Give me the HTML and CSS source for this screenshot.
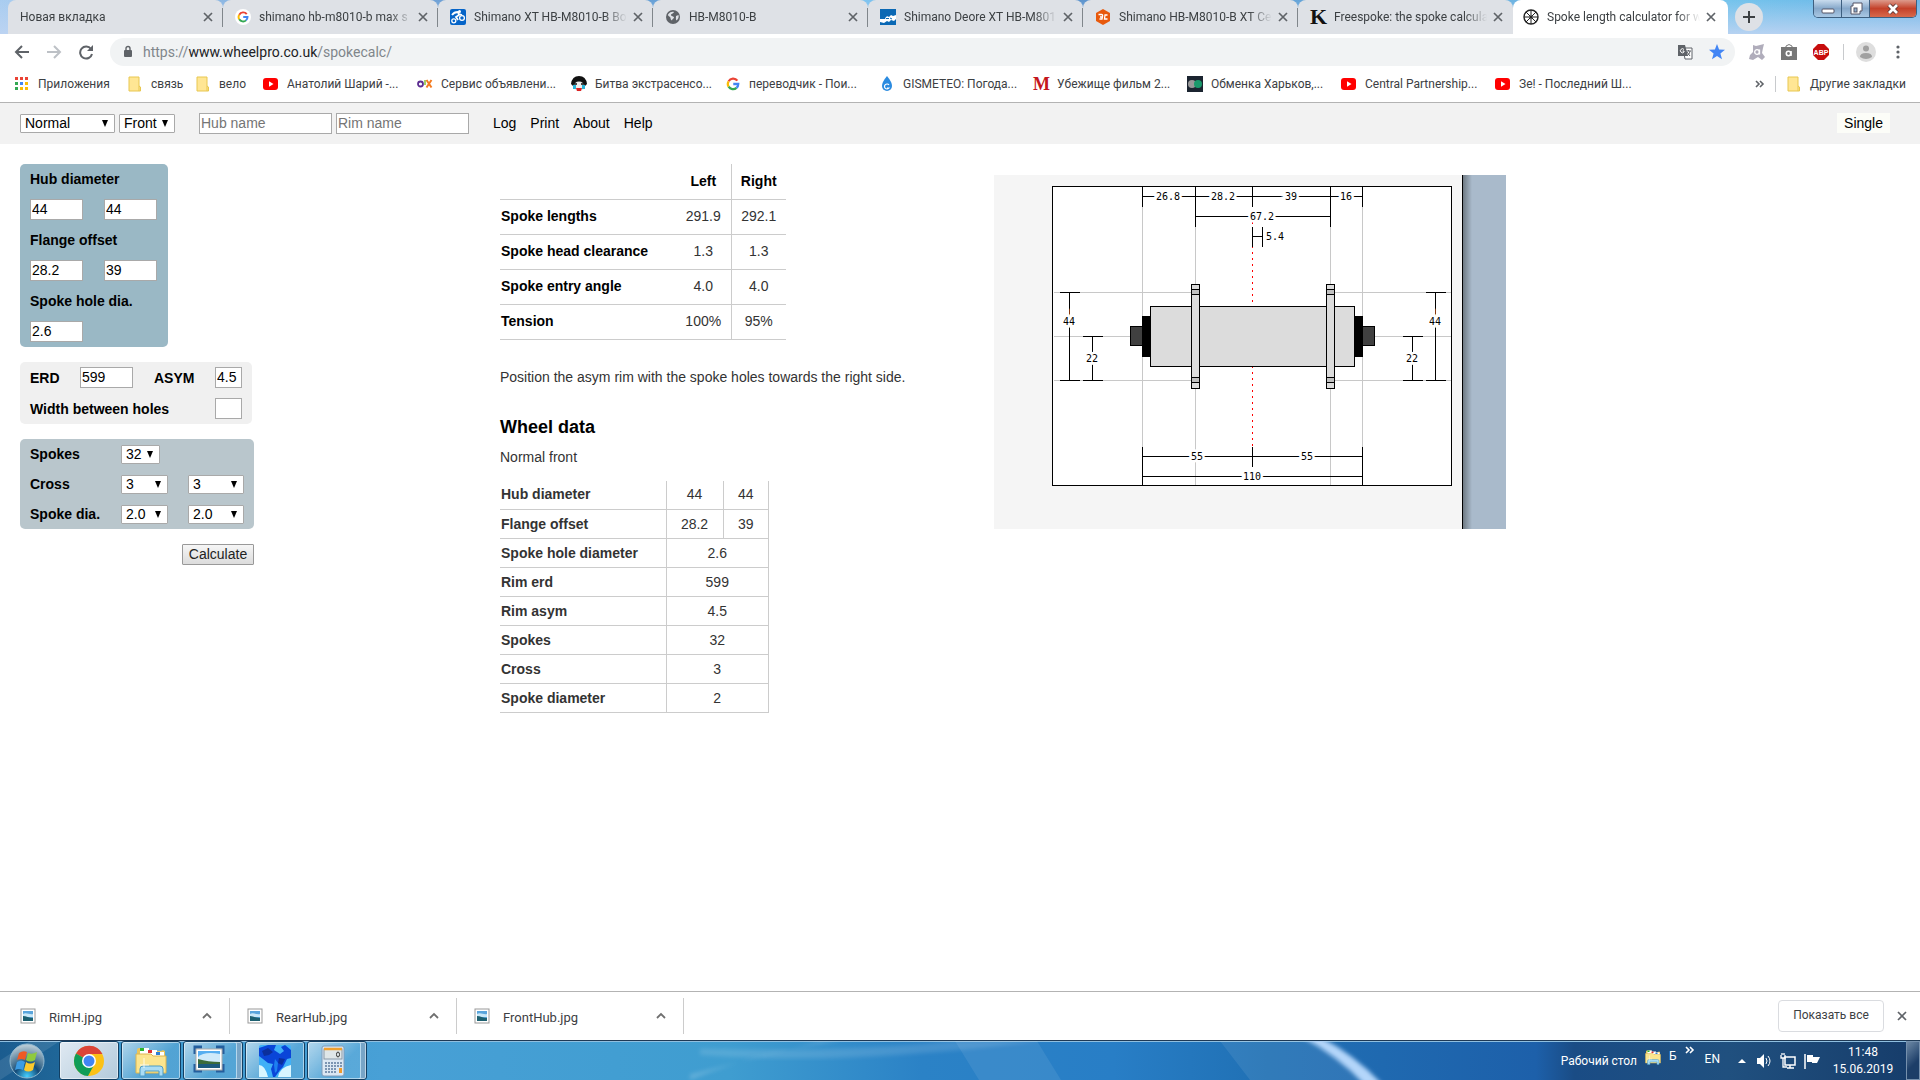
FILE: index.html
```html
<!DOCTYPE html>
<html lang="en">
<head>
    <meta charset="UTF-8">
    <meta name="viewport" content="width=device-width, initial-scale=1.0">
    <title>Spoke length calculator for wheelbuilding</title>
    <link rel="stylesheet" href="styles.css">
</head>
<body>
    <!-- shared icons -->
    <svg class="sprite" aria-hidden="true">
        <symbol id="i-close" viewBox="0 0 10 10"><path d="M1 1l8 8M9 1l-8 8" stroke="#5f6368" stroke-width="1.7"/></symbol>
        <symbol id="i-google" viewBox="0 0 16 16">
            <path d="M13 4.2A6 6 0 0 0 3 4.9" fill="none" stroke="#ea4335" stroke-width="2.6"/>
            <path d="M3 4.9a6 6 0 0 0 0 6.2" fill="none" stroke="#fbbc05" stroke-width="2.6"/>
            <path d="M3 11.1a6 6 0 0 0 9 1.4" fill="none" stroke="#34a853" stroke-width="2.6"/>
            <path d="M12 12.5A6 6 0 0 0 14 8H8.3" fill="none" stroke="#4285f4" stroke-width="2.6"/>
        </symbol>
        <symbol id="i-folder" viewBox="0 0 14 16"><path d="M1 1h10v9l1.5 1v4H1z" fill="#ffe694" stroke="#e8c750"/><path d="M11 10v5" stroke="#e8c750"/></symbol>
        <symbol id="i-youtube" viewBox="0 0 16 16"><rect x="0" y="2" width="15" height="12" rx="3" fill="#f00"/><path d="M6 5.3v5.4L10.5 8z" fill="#fff"/></symbol>
        <symbol id="i-picture" viewBox="0 0 16 16">
            <rect x="1" y="1" width="14" height="14" fill="#fff" stroke="#999"/>
            <rect x="3" y="3" width="10" height="10" fill="#5aa5dc"/>
            <path d="M3 6c3-2 7 1 10 0v3H3z" fill="#c9e8f8"/>
            <path d="M3 8c3 0 6 2 10 2v3H3z" fill="#1d6070"/>
        </symbol>
        <symbol id="i-up" viewBox="0 0 10 8"><path d="M1 6l4-4 4 4" fill="none" stroke="#6f6f6f" stroke-width="1.8"/></symbol>
        <symbol id="i-files" viewBox="0 0 32 32">
            <path d="M2 5q0-2 2-2h8l2 3h12l2-1 2 1v22H2z" fill="#e9c55c"/>
            <rect x="5" y="3" width="9" height="7" fill="#fff"/><rect x="5" y="3" width="4" height="3" fill="#2db52d"/>
            <rect x="13" y="5" width="9" height="6" fill="#fff"/><rect x="13" y="5" width="4" height="3" fill="#d33"/>
            <rect x="20" y="7" width="9" height="5" fill="#fff"/><rect x="21" y="7" width="4" height="3" fill="#2b7fd8"/>
            <path d="M1 9h15l2 2h13v17H1z" fill="#fbe58f" stroke="#dcb650"/>
            <path d="M5 31v-7q0-3 3-3h17q3 0 3 3v7h-4v-5H10v5z" fill="#a9dcf5" stroke="#4d9cc5"/>
            <path d="M9 13v10M5 20h9" stroke="#fff" opacity=".8"/>
        </symbol>
    </svg>

    <header class="browser">
        <div class="tabstrip">
            <div class="tab">
                <span class="tab-title">Новая вкладка</span>
                <button class="tab-close" aria-label="Close"><svg><use href="#i-close"/></svg></button>
            </div>
            <div class="tab">
                <svg class="icon" viewBox="0 0 16 16"><circle cx="8" cy="8" r="8" fill="#fff"/><use href="#i-google" x="2" y="2" width="12" height="12"/></svg>
                <span class="tab-title">shimano hb-m8010-b max s</span>
                <button class="tab-close" aria-label="Close"><svg><use href="#i-close"/></svg></button>
            </div>
            <div class="tab">
                <svg class="icon" viewBox="0 0 16 16"><rect width="16" height="16" rx="2" fill="#0564c8"/><g fill="none" stroke="#fff" stroke-width="1.3"><circle cx="3.8" cy="11.8" r="2"/><circle cx="12" cy="9" r="2.4"/><path d="M2 6q2-3 6-3l1 3-3 2 2 3M9 5l3 1" stroke-width="1.8"/></g><circle cx="9.500" cy="2.500" r="1.500" fill="#fff"/></svg>
                <span class="tab-title">Shimano XT HB-M8010-B Bo</span>
                <button class="tab-close" aria-label="Close"><svg><use href="#i-close"/></svg></button>
            </div>
            <div class="tab">
                <svg class="icon" viewBox="0 0 16 16"><circle cx="8" cy="8" r="7" fill="#5f6368"/><path d="M3 5.5c2-3 5-3 6-2.5-1 2-3 1.5-3 3s3 1 3 2.5-2 1-2 3c-2-1-1-2.5-2-3.5S3 7 3 5.5zM11 7l2.5-1c.5 2 0 4-2 5.5-1-1.5-.5-3-.5-4.5z" fill="#dee1e6"/></svg>
                <span class="tab-title">HB-M8010-B</span>
                <button class="tab-close" aria-label="Close"><svg><use href="#i-close"/></svg></button>
            </div>
            <div class="tab">
                <svg class="icon" viewBox="0 0 16 16"><rect width="16" height="16" fill="#0a68b4"/><path d="M0 10h5q1-4 4-2l2-2 2 1 3-1v4l-2 2-3-1-2 2-2-1-3 2-4-1z" fill="#fff"/><path d="M6 9.5h3M10 9l2 1" stroke="#0a68b4"/></svg>
                <span class="tab-title">Shimano Deore XT HB-M801</span>
                <button class="tab-close" aria-label="Close"><svg><use href="#i-close"/></svg></button>
            </div>
            <div class="tab">
                <svg class="icon" viewBox="0 0 16 16"><path d="M8 0l7 4v8l-7 4-7-4V4z" fill="#e8590c"/><path d="M3.500 5.500h3q1.500 0 1 2L7 10H4.500M12.500 6h-2.500L9.500 10h3M5 8h2" fill="none" stroke="#fff" stroke-width="1.300"/></svg>
                <span class="tab-title">Shimano HB-M8010-B XT Ce</span>
                <button class="tab-close" aria-label="Close"><svg><use href="#i-close"/></svg></button>
            </div>
            <div class="tab tab-last">
                <span class="icon letter-k">K</span>
                <span class="tab-title">Freespoke: the spoke calcula</span>
                <button class="tab-close" aria-label="Close"><svg><use href="#i-close"/></svg></button>
            </div>
            <div class="tab tab-active">
                <svg class="icon" viewBox="0 0 16 16"><g fill="none" stroke="#222"><circle cx="8" cy="8" r="7" stroke-width="1.4"/><path d="M8 1v14M1 8h14M3 3l10 10M13 3L3 13"/></g><circle cx="8" cy="8" r="1.5" fill="#222"/></svg>
                <span class="tab-title">Spoke length calculator for w</span>
                <button class="tab-close" aria-label="Close"><svg><use href="#i-close"/></svg></button>
            </div>
            <button class="new-tab" aria-label="New tab"><svg viewBox="0 0 14 14"><path d="M7 1v12M1 7h12" stroke="#3c4043" stroke-width="2"/></svg></button>
            <div class="window-buttons">
                <button aria-label="Minimize"><svg viewBox="0 0 16 14"><rect x="2" y="7" width="12" height="4" rx="1" fill="#fff" stroke="#556"/></svg></button>
                <button aria-label="Restore"><svg viewBox="0 0 16 14"><path d="M5 1h9v8h-2v3H3V4h2z" fill="#fff" stroke="#556"/><rect x="6" y="6" width="3" height="4" fill="#8fb0cf" stroke="#556"/></svg></button>
                <button class="window-close" aria-label="Close window"><svg viewBox="0 0 16 14"><path d="M4 3l8 8M12 3l-8 8" stroke="#533" stroke-width="4.5"/><path d="M4 3l8 8M12 3l-8 8" stroke="#fff" stroke-width="2.8"/></svg></button>
            </div>
        </div>

        <div class="toolbar">
            <button class="nav" aria-label="Back"><svg viewBox="0 0 16 16"><path d="M15 8H2M8 2L2 8l6 6" fill="none" stroke="#5f6368" stroke-width="2"/></svg></button>
            <button class="nav" aria-label="Forward"><svg viewBox="0 0 16 16"><path d="M1 8h13M8 2l6 6-6 6" fill="none" stroke="#bdc1c6" stroke-width="2"/></svg></button>
            <button class="nav" aria-label="Reload"><svg viewBox="0 0 16 16"><path d="M13 5a6 6 0 1 0 1 5" fill="none" stroke="#5f6368" stroke-width="2"/><path d="M15 1v6H9z" fill="#5f6368"/></svg></button>
            <div class="omnibox">
                <svg class="lock" viewBox="0 0 10 14"><rect x="1" y="5" width="8" height="7" rx="1" fill="#5f6368"/><path d="M3 6V3.5a2 2 0 0 1 4 0V6" fill="none" stroke="#5f6368" stroke-width="1.4"/></svg>
                <span class="url">https://<b>www.wheelpro.co.uk</b>/spokecalc/</span>
                <svg class="icon" viewBox="0 0 16 16"><path d="M6 4h9v11H8z" fill="#fff" stroke="#5f6368"/><path d="M1 1h7l3 11H1z" fill="#5f6368"/><path d="M7 5.5A2 2 0 1 0 7 8V7H5.5" fill="none" stroke="#fff"/><path d="M9 7h5M11.5 6v1M13 7c-.5 3-2 4-3 5M10 8l3 4" fill="none" stroke="#5f6368"/></svg>
                <svg class="icon" viewBox="0 0 16 16"><path d="M8 0l2.1 5.6 5.9.2-4.6 3.7 1.6 5.8L8 12l-5 3.3 1.6-5.800L0 5.800l5.900-.2z" fill="#4285f4"/></svg>
            </div>
            <svg class="icon" viewBox="0 0 16 16"><path d="M4 1l3 1 8-2-1 4-1 5 3 4-3 3-4-3-5 3-4-1 1-4 3-3z" fill="#b0adbb"/><circle cx="8" cy="8" r="2.300" fill="none" stroke="#fff" stroke-width="1.300"/><path d="M10.500 5.500v5" stroke="#fff" stroke-width="1.300"/></svg>
            <svg class="icon" viewBox="0 0 16 16"><path d="M0 3h16v13H0z" fill="#777"/><path d="M5 4V2q3-3 6 0v2" fill="none" stroke="#777"/><circle cx="7.500" cy="9.500" r="2.200" fill="none" stroke="#fff" stroke-width="1.600"/><path d="M10 7v5" stroke="#fff" stroke-width="1.600"/></svg>
            <svg class="icon" viewBox="0 0 16 16"><path d="M5 0h6l5 5v6l-5 5H5l-5-5V5z" fill="#c70d0d"/><text x="8" y="11" class="abp">ABP</text></svg>
            <i class="divider"></i>
            <svg class="avatar" viewBox="0 0 20 20"><circle cx="10" cy="10" r="10" fill="#dedede"/><circle cx="10" cy="6.500" r="3" fill="#a0a0a0"/><path d="M4 15q0-4 6-4t6 4q-6 4-12 0z" fill="#a0a0a0"/></svg>
            <button class="menu" aria-label="Menu"><svg viewBox="0 0 4 14"><g fill="#5f6368"><circle cx="2" cy="2" r="1.600"/><circle cx="2" cy="7" r="1.600"/><circle cx="2" cy="12" r="1.600"/></g></svg></button>
        </div>

        <nav class="bookmarks">
            <a href="#" class="apps"><svg class="icon" viewBox="0 0 16 16"><g fill="#ea4335"><path d="M1 1h3v3H1zM6 1h3v3H6zM11 1h3v3h-3z"/></g><path d="M1 6h3v3H1zM1 11h3v3H1z" fill="#34a853"/><path d="M6 6h3v3H6z" fill="#4285f4"/><path d="M6 11h3v3H6zM11 11h3v3h-3zM11 6h3v3h-3z" fill="#fbbc05"/></svg>Приложения</a>
            <a href="#" class="folder"><svg class="icon"><use href="#i-folder"/></svg>связь</a>
            <a href="#" class="folder"><svg class="icon"><use href="#i-folder"/></svg>вело</a>
            <a href="#"><svg class="icon"><use href="#i-youtube"/></svg>Анатолий Шарий -...</a>
            <a href="#"><svg class="icon" viewBox="0 0 16 16"><circle cx="3.5" cy="8" r="2.5" fill="none" stroke="#5c2d91" stroke-width="1.8"/><path d="M8 4v5" stroke="#8cc63f" stroke-width="1.6"/><path d="M9.500 4l5 7.500M14.500 4l-5 7.500" stroke="#f47b20" stroke-width="2"/></svg>Сервис объявлени...</a>
            <a href="#"><svg class="icon" viewBox="0 0 16 16"><path d="M0 8Q1 0 8 0t8 8l-3 3H3z" fill="#111"/><ellipse cx="8" cy="10.500" rx="5.500" ry="5" fill="#eee"/><path d="M3 8h3M10 8h3" stroke="#111" stroke-width="1.500"/><path d="M2 9h3v4H2zM11 9h3v4h-3z" fill="#28b4d8"/><path d="M5 12h6l-1 3H6z" fill="#d22"/></svg>Битва экстрасенсо...</a>
            <a href="#"><svg class="icon" viewBox="0 0 16 16"><use href="#i-google" x="1" y="1" width="14" height="14"/></svg>переводчик - Пои...</a>
            <a href="#"><svg class="icon" viewBox="0 0 16 16"><path d="M8 0q5 6 5 10a5 5 0 0 1-10 0Q3 6 8 0z" fill="#2b8be0"/><path d="M10 9a2.500 2.500 0 1 0 0 3H8" fill="none" stroke="#fff" stroke-width="1.200"/></svg>GISMETEO: Погода...</a>
            <a href="#"><span class="icon letter-m">M</span>Убежище фильм 2...</a>
            <a href="#"><svg class="icon" viewBox="0 0 16 16"><rect width="16" height="16" fill="#1b2430"/><circle cx="5" cy="8" r="4" fill="#999"/><circle cx="11" cy="8" r="4" fill="#1a9a6c"/></svg>Обменка Харьков,...</a>
            <a href="#"><svg class="icon"><use href="#i-youtube"/></svg>Central Partnership...</a>
            <a href="#"><svg class="icon"><use href="#i-youtube"/></svg>Зе! - Последний Ш...</a>
            <div class="bookmarks-end">
                <button class="more" aria-label="More bookmarks"><svg viewBox="0 0 10 8"><path d="M1 1l3 3-3 3M5 1l3 3-3 3" fill="none" stroke="#5f6368" stroke-width="1.600"/></svg></button>
                <i class="divider"></i>
                <a href="#" class="other"><svg class="icon"><use href="#i-folder"/></svg>Другие закладки</a>
            </div>
        </nav>
    </header>

    <div class="topbar">
        <select class="wheel-type" aria-label="Wheel type"><option>Normal</option></select>
        <select class="wheel-end" aria-label="Wheel"><option>Front</option></select>
        <input class="hub-name" type="text" placeholder="Hub name" aria-label="Hub name">
        <input type="text" placeholder="Rim name" aria-label="Rim name">
        <nav class="links">
            <a href="#">Log</a>
            <a href="#">Print</a>
            <a href="#">About</a>
            <a href="#">Help</a>
        </nav>
        <a href="#" class="single">Single</a>
    </div>

    <main>
        <form class="inputs">
            <div class="panel hub">
                <label for="hub-l">Hub diameter</label>
                <input type="text" id="hub-l" value="44"><input type="text" aria-label="Hub diameter right" value="44">
                <label for="flange-l">Flange offset</label>
                <input type="text" id="flange-l" value="28.2"><input type="text" aria-label="Flange offset right" value="39">
                <label for="hole">Spoke hole dia.</label>
                <input type="text" id="hole" value="2.6">
            </div>
            <div class="panel rim">
                <label for="erd">ERD</label><input type="text" id="erd" value="599">
                <label for="asym">ASYM</label><input type="text" class="small" id="asym" value="4.5">
                <label for="width" class="wide">Width between holes</label><input type="text" class="small" id="width">
            </div>
            <div class="panel spokes">
                <label for="spokes">Spokes</label><select id="spokes" class="count"><option>32</option></select>
                <label for="cross">Cross</label><select id="cross"><option>3</option></select><select class="right" aria-label="Cross right"><option>3</option></select>
                <label for="dia">Spoke dia.</label><select id="dia"><option>2.0</option></select><select class="right" aria-label="Spoke dia. right"><option>2.0</option></select>
            </div>
            <button type="button" class="calculate">Calculate</button>
        </form>

        <section class="results">
            <table class="lengths">
                <tr><th></th><th>Left</th><th>Right</th></tr>
                <tr><th>Spoke lengths</th><td>291.9</td><td>292.1</td></tr>
                <tr><th>Spoke head clearance</th><td>1.3</td><td>1.3</td></tr>
                <tr><th>Spoke entry angle</th><td>4.0</td><td>4.0</td></tr>
                <tr><th>Tension</th><td>100%</td><td>95%</td></tr>
            </table>
            <p class="note">Position the asym rim with the spoke holes towards the right side.</p>
            <h2>Wheel data</h2>
            <p>Normal front</p>
            <table class="data">
                <tr><th>Hub diameter</th><td class="left">44</td><td class="right">44</td></tr>
                <tr><th>Flange offset</th><td>28.2</td><td>39</td></tr>
                <tr><th>Spoke hole diameter</th><td colspan="2">2.6</td></tr>
                <tr><th>Rim erd</th><td colspan="2">599</td></tr>
                <tr><th>Rim asym</th><td colspan="2">4.5</td></tr>
                <tr><th>Spokes</th><td colspan="2">32</td></tr>
                <tr><th>Cross</th><td colspan="2">3</td></tr>
                <tr><th>Spoke diameter</th><td colspan="2">2</td></tr>
            </table>
        </section>

        <div class="drawing">
            <svg class="hub-drawing" width="400" height="300" viewBox="0 0 400 300">
                <g transform="translate(.5 .5)" shape-rendering="crispEdges">
                    <rect width="399" height="299" fill="#fff" stroke="#000"/>
                    <path class="guide" d="M90 1V298M143 1V298M278 1V298M310 1V298M1 106H143M278 106H398M1 150H398M1 194H143M278 194H398"/>
                    <path d="M200 35V260" stroke="red" stroke-dasharray="2 4"/>
                    <rect x="78" y="140" width="12" height="19" fill="#404040" stroke="#000"/>
                    <rect x="310" y="140" width="12" height="19" fill="#404040" stroke="#000"/>
                    <rect x="90" y="130" width="8" height="40" stroke="#000"/>
                    <rect x="302" y="130" width="8" height="40" stroke="#000"/>
                    <rect x="98" y="120" width="204" height="60" fill="#dcdcdc" stroke="#000"/>
                    <g fill="#dcdcdc" stroke="#000">
                        <rect x="139" y="98" width="8" height="104"/>
                        <rect x="274" y="98" width="8" height="104"/>
                        <g fill="#c0c0c0">
                            <rect x="139" y="103" width="8" height="5"/>
                            <rect x="274" y="103" width="8" height="5"/>
                            <rect x="139" y="191" width="8" height="5"/>
                            <rect x="274" y="191" width="8" height="5"/>
                        </g>
                    </g>
                    <!-- dimension lines -->
                    <path d="M90 10H310M90 0V20M143 0V40M200 0V20M278 0V40M310 0V20M143 30H278M200 40V60M210 40V60M200 50H210" stroke="#000"/>
                    <path d="M90 260V299M200 260V280M310 260V299M90 270H310M90 290H310" stroke="#000"/>
                    <path d="M17 106V194M7 106H27M7 194H27M40 150V194M30 150H50M30 194H50" stroke="#000"/>
                    <path d="M383 106V194M373 106H393M373 194H393M360 150V194M350 150H370M350 194H370" stroke="#000"/>
                </g>
                <g class="dims">
                    <text x="116" y="14">26.8</text>
                    <text x="171" y="14">28.2</text>
                    <text x="239" y="14">39</text>
                    <text x="294" y="14">16</text>
                    <text x="210" y="34">67.2</text>
                    <text x="223" y="54">5.4</text>
                    <text x="17" y="139">44</text>
                    <text x="383" y="139">44</text>
                    <text x="40" y="176">22</text>
                    <text x="360" y="176">22</text>
                    <text x="145" y="274">55</text>
                    <text x="255" y="274">55</text>
                    <text x="200" y="294">110</text>
                </g>
            </svg>
        </div>
    </main>

    <div class="downloads">
        <div class="download"><svg class="icon"><use href="#i-picture"/></svg><span>RimH.jpg</span><svg class="up"><use href="#i-up"/></svg></div>
        <div class="download"><svg class="icon"><use href="#i-picture"/></svg><span>RearHub.jpg</span><svg class="up"><use href="#i-up"/></svg></div>
        <div class="download"><svg class="icon"><use href="#i-picture"/></svg><span>FrontHub.jpg</span><svg class="up"><use href="#i-up"/></svg></div>
        <button class="show-all">Показать все</button>
        <button class="hide" aria-label="Close"><svg><use href="#i-close"/></svg></button>
    </div>

    <footer class="taskbar">
        <svg class="streaks" viewBox="0 0 1920 40" preserveAspectRatio="none">
            <defs><filter id="soft"><feGaussianBlur stdDeviation="2"/></filter></defs>
            <path d="M0 40L60 0H30L0 20z" fill="#fff" opacity=".1"/>
            <path d="M690 40Q760 10 840 0h-20Q750 20 690 34z" fill="#fff" opacity=".18" filter="url(#soft)"/>
            <path d="M700 14q140 12 340-14h-90q-100 12-250 8z" fill="#fff" opacity=".12" filter="url(#soft)"/>
            <path d="M955 0h82l24 40h-82zM1220 0h90l60 40h-120z" fill="#fff" opacity=".08"/>
            <path d="M1302-4h18q34 18 62 48h-18q-26-28-62-48z" fill="#b4d6fa" filter="url(#soft)"/>
        </svg>
        <button class="start" aria-label="Start">
            <svg viewBox="0 0 38 38">
                <defs><radialGradient id="orb" cx=".5" cy=".95" r=".9"><stop offset="0" stop-color="#45d0ff"/><stop offset=".4" stop-color="#134a78"/><stop offset=".6" stop-color="#4d7896"/><stop offset="1" stop-color="#b5c8d3"/></radialGradient></defs>
                <circle cx="19" cy="19" r="17" fill="url(#orb)" stroke="#8fb8d0"/>
                <path d="M11 11q4-3 8-1l-2 8q-4-2-8 0z" fill="#ef5a24"/>
                <path d="M20 11q4 2 9-1l-2 8q-5 3-9 0z" fill="#8fca3d"/>
                <path d="M9 20q4-3 8 0l-2 8q-4-2-8 0z" fill="#3c9ce4"/>
                <path d="M18 20q4 3 9 0l-2 8q-5 3-9 0z" fill="#fdc92c"/>
            </svg>
        </button>
        <button class="task task-active" aria-label="Chrome">
            <svg viewBox="0 0 32 32"><circle cx="16" cy="16" r="15" fill="#fbc116"/><path d="M16 16L3 8.500A15 15 0 0 1 29.500 9H16z" fill="#db4437"/><path d="M16 16L3 8.500A15 15 0 0 0 15 31l6-11z" fill="#0f9d58"/><circle cx="16" cy="16" r="7" fill="#fff"/><circle cx="16" cy="16" r="5.500" fill="#4285f4"/></svg>
        </button>
        <button class="task" aria-label="Explorer"><svg><use href="#i-files"/></svg></button>
        <button class="task stack" aria-label="Pictures">
            <svg viewBox="0 0 32 32"><path d="M2 9V2h7M23 2h7v7M30 19v7h-7M9 26H2v-7" fill="none" stroke="#245f9e" stroke-width="3"/><rect x="3" y="4" width="26" height="21" fill="#fff" stroke="#aaa"/><rect x="5" y="6" width="22" height="17" fill="#57aef0"/><path d="M5 12q6-6 22-3v8H5z" fill="#cfeafa"/><path d="M5 14q10 3 22 3v3H5z" fill="#3b6b3a"/><path d="M5 19h22v4H5z" fill="#1c5a7e"/></svg>
        </button>
        <button class="task" aria-label="Map">
            <svg viewBox="0 0 32 32"><rect width="32" height="32" rx="2" fill="#3fb0f7"/><path d="M0 20q6 0 9 12H0zM19 32q2-10 13-12v12z" fill="#d8f6ff"/><path d="M0 3L9 0h8l-2 5 6 4 4-3-3-4 4-2 6 5v8l-4 1-4 8-3 3-5 7h-2l-2-8 2-5-5-1-5-4-4-3z" fill="#0a45d8"/><path d="M3 6l6-3 5 4-4 3-5 1zM20 13l6 1-3 6-4-2z" fill="#0b2f9c"/><path d="M16 14l3 4-1 8-2 2-1-8z" fill="#1d80f0"/></svg>
        </button>
        <button class="task stack" aria-label="Calculator">
            <svg viewBox="0 0 32 32"><rect x="5" y="1" width="22" height="30" rx="2" fill="#dbe7f3" stroke="#7f9cba"/><rect x="7" y="4" width="18" height="10" fill="#dfe6e8" stroke="#8a9aa8"/><path d="M7 4h18" stroke="#f0a030" stroke-width="2.500"/><ellipse cx="21" cy="9.500" rx="1.500" ry="2.500" fill="none" stroke="#333"/><g stroke="#7c95b2" stroke-width="2" stroke-dasharray="2 1"><path d="M8 18h17M8 21h17M8 24h12M8 27h12"/></g><rect x="22" y="23" width="3" height="5" fill="#f09b2c"/></svg>
        </button>
        <div class="tray">
            <span class="desktop">Рабочий стол</span>
            <svg class="tray-files"><use href="#i-files"/></svg>
            <span class="cut">Б</span>
            <svg class="chev" viewBox="0 0 10 8"><path d="M1 1l3 3-3 3M5 1l3 3-3 3" fill="none" stroke="#fff" stroke-width="1.600"/></svg>
            <span class="lang">EN</span>
            <svg class="tri" viewBox="0 0 8 4"><path d="M4 0l4 4H0z" fill="#fff"/></svg>
            <svg class="icon" viewBox="0 0 16 16"><path d="M1 5h3l4-4v14l-4-4H1z" fill="#fff"/><path d="M10 5q2 3 0 6M12 3q4 5 0 10" fill="none" stroke="#fff"/></svg>
            <svg class="icon" viewBox="0 0 16 16"><path d="M5 4h10v8H5zM7 15h7M10 12v3" fill="none" stroke="#fff" stroke-width="1.500"/><path d="M1 2v3h4V2M3 5v9h4M2 0v2M4 0v2" fill="none" stroke="#fff" stroke-width="1.300"/></svg>
            <svg class="icon" viewBox="0 0 16 16"><path d="M1 1v15" stroke="#fff" stroke-width="1.500"/><path d="M3 2h6v2h7l-3 6H8V9H3z" fill="#fff"/></svg>
            <div class="clock"><span>11:48</span><span>15.06.2019</span></div>
            <button class="peek" aria-label="Show desktop"></button>
        </div>
    </footer>
</body>
</html>
```

FILE: styles.css
```css
* {
    box-sizing: border-box;
}
body {
    margin: 0;
    min-height: 100vh;
    display: flex;
    flex-direction: column;
    background: #fff;
    color: #333;
    font-family: "Liberation Sans", Arial, sans-serif;
    font-size: 14px;
}
.sprite {
    position: absolute;
    width: 0;
    height: 0;
}
button {
    padding: 0;
    border: none;
    background: none;
    font: inherit;
    color: inherit;
}
a {
    color: inherit;
    text-decoration: none;
}
.icon {
    width: 16px;
    height: 16px;
    flex: none;
}
.divider {
    width: 1px;
    height: 16px;
    background: #c8cacd;
}

/* browser window */
.browser, .downloads, .taskbar {
    font-family: Roboto, "Noto Sans", sans-serif;
    font-size: 12px;
}
.browser {
    border-bottom: 1px solid #b3b3b3;
    color: #3c4043;
}
.tabstrip {
    display: flex;
    align-items: center;
    height: 34px;
    padding-left: 8px;
    background: linear-gradient(rgba(255, 255, 255, 0), rgba(190, 212, 242, 0.9)), linear-gradient(90deg, #a9cdf0, #5d93cd 30%, #7fc4f0 45%, #5c92cc 55%, #74c3ec 90%, #6ab4e6);
}
.tab {
    display: flex;
    align-items: center;
    flex: 0 1 215px;
    min-width: 0;
    height: 34px;
    padding: 0 10px 0 12px;
    border-radius: 8px 8px 0 0;
    background: linear-gradient(#80868b, #80868b) right 8px / 1px 19px no-repeat #dee1e6;
}
.tab-last {
    background: #dee1e6;
}
.tab-active {
    padding: 0 12px 0 10px;
    background: #fff;
}
.tab .icon {
    margin-right: 8px;
}
.tab-title {
    flex: 1;
    overflow: hidden;
    white-space: nowrap;
    -webkit-mask-image: linear-gradient(90deg, #000 85%, transparent);
    mask-image: linear-gradient(90deg, #000 85%, transparent);
}
.tab-close {
    width: 10px;
    height: 10px;
    margin-left: 6px;
}
.tab-close svg, .hide svg {
    display: block;
    width: 10px;
    height: 10px;
}
.letter-k, .letter-m {
    font: bold 22px/16px "Liberation Serif", serif;
    color: #111;
}
.letter-m {
    font-size: 18px;
    color: #c4161c;
}
.new-tab {
    width: 28px;
    height: 28px;
    margin-left: 7px;
    border-radius: 50%;
    background: #dee1e6;
}
.new-tab svg {
    display: block;
    width: 14px;
    margin: auto;
}
.window-buttons {
    display: flex;
    align-self: flex-start;
    margin: 0 3px 0 auto;
    border: 1px solid #3d5f80;
    border-top: none;
    border-radius: 0 0 5px 5px;
    overflow: hidden;
}
.window-buttons button {
    width: 28px;
    height: 17px;
    border-right: 1px solid #3d5f80;
    background: linear-gradient(#c9dcee, #86a8ca 50%, #a9c8e4);
}
.window-buttons svg {
    display: block;
    width: 16px;
    height: 14px;
    margin: auto;
}
.window-buttons .window-close {
    width: 46px;
    border: none;
    background: linear-gradient(#dd9b8c, #c4412a 50%, #d8694b);
}
.toolbar {
    display: flex;
    align-items: center;
    height: 36px;
    padding: 0 20px 0 14px;
    gap: 16px;
}
.nav {
    width: 16px;
    height: 16px;
}
.nav svg {
    display: block;
}
.omnibox {
    display: flex;
    align-items: center;
    gap: 16px;
    flex: 1;
    height: 28px;
    padding: 0 10px 0 13px;
    border-radius: 14px;
    background: #f1f3f4;
}
.toolbar .omnibox {
    margin-right: -2px;
}
.lock {
    width: 10px;
    height: 14px;
}
.url {
    flex: 1;
    margin-left: -6px;
    font-size: 14px;
    color: #80868b;
}
.url b {
    font-weight: normal;
    color: #202124;
}
.abp {
    font: bold 7px "Liberation Sans", sans-serif;
    text-anchor: middle;
    fill: #fff;
}
.toolbar .divider {
    margin-left: -2px;
}
.avatar {
    width: 20px;
    height: 20px;
    margin-left: -4px;
}
.menu {
    width: 4px;
    margin-left: 4px;
}
.menu svg {
    display: block;
}
.bookmarks {
    display: flex;
    align-items: center;
    height: 32px;
    padding: 0 14px 4px;
    white-space: nowrap;
}
.bookmarks a {
    display: flex;
    align-items: center;
    gap: 8px;
    flex: 0 1 154px;
}
.bookmarks .apps {
    flex-basis: 113px;
}
.bookmarks .folder {
    flex-basis: 68px;
}
.bookmarks-end {
    display: flex;
    align-items: center;
    gap: 10px;
    margin-left: auto;
}
.bookmarks .other {
    flex: none;
}
.more svg {
    display: block;
    width: 10px;
    height: 8px;
}

/* calculator */
.topbar {
    display: flex;
    align-items: center;
    gap: 4px;
    height: 41px;
    padding: 0 30px 1px 20px;
    background: #f2f2f2;
    color: #000;
}
input, select {
    height: 21px;
    margin: 0;
    padding: 0 1px 1px;
    border: 1px solid #a9a9a9;
    border-radius: 0;
    background: #fff;
    color: #000;
    font: 14px "Liberation Sans", Arial, sans-serif;
}
input::placeholder {
    color: #757575;
}
select {
    height: 19px;
    padding: 0 4px;
    border-radius: 1px;
    appearance: none;
    background: #fff url("data:image/svg+xml,%3Csvg xmlns='http://www.w3.org/2000/svg' width='6' height='7'%3E%3Cpath d='M0 0h6L3 7z'/%3E%3C/svg%3E") no-repeat right 6px center;
}
.topbar input {
    width: 133px;
}
.topbar .hub-name {
    margin-left: 20px;
}
.wheel-type {
    width: 95px;
}
.wheel-end {
    width: 56px;
}
.links {
    display: flex;
    gap: 14px;
    margin-left: 20px;
}
.single {
    margin-left: auto;
    padding: 2px 7px;
    background: #fcfdf8;
}
main {
    flex: 1;
    display: grid;
    grid-template-columns: 480fr 494fr 906fr;
    align-items: start;
    padding: 20px;
}
.inputs {
    width: 234px;
}
.panel {
    display: grid;
    align-items: center;
    width: fit-content;
    margin-bottom: 15px;
    padding: 0 10px;
    border-radius: 5px;
    color: #000;
}
.panel label {
    font-weight: bold;
}
.panel input {
    width: 53px;
}
.panel .small {
    width: 27px;
}
.hub {
    grid-template-columns: 74px 54px;
    grid-template-rows: repeat(3, 30px 31px);
    background: #9ab8c5;
}
.hub label {
    grid-column: 1 / -1;
}
.rim {
    grid-template-columns: 50px 74px 61px 27px;
    grid-auto-rows: 31px;
    background: #f0f0f0;
}
.rim .wide {
    grid-column: 1 / 4;
}
.spokes {
    grid-template-columns: 91px 67px 56px;
    grid-auto-rows: 30px;
    background: #b9c6cc;
}
.spokes label {
    grid-column: 1;
}
.spokes select {
    width: 47px;
}
.spokes .count {
    width: 39px;
}
.spokes .right {
    width: 56px;
}
.calculate {
    display: block;
    width: 72px;
    height: 21px;
    margin-left: auto;
    padding-bottom: 1px;
    border: 1px solid #999;
    border-radius: 1px;
    background: linear-gradient(#f6f6f6, #dcdcdc);
    color: #222;
}
table {
    border-collapse: collapse;
    text-align: center;
}
th, td {
    padding: 0 2px 1px;
    border-bottom: 1px solid #ccc;
}
th:first-child {
    padding-left: 1px;
    text-align: left;
}
.lengths {
    width: 286px;
    table-layout: fixed;
}
.lengths tr {
    height: 35px;
}
.lengths th {
    color: #000;
}
.lengths th:first-child {
    width: 176px;
}
.lengths th:last-child, .lengths td:last-child {
    border-left: 1px solid #ccc;
}
.note {
    margin: 29px 0 32px;
    line-height: 16px;
}
h2 {
    margin: 0 0 12px;
    color: #000;
    font-size: 18px;
    line-height: 20px;
}
.results p:not(.note) {
    margin: 0 0 16px;
    line-height: 16px;
}
.data {
    width: 269px;
}
.data tr {
    height: 29px;
}
.data td {
    border-left: 1px solid #ccc;
    border-right: 1px solid #ccc;
}
.data th {
    width: 166px;
}
.data .left {
    width: 57px;
}
.drawing {
    width: 512px;
    height: 354px;
    margin-top: 11px;
    padding: 11px 0 0 58px;
    background: linear-gradient(90deg, #f5f5f5 468px, #000 468px, #000 469px, #6f7a83 469px, #a9bacb 478px);
}
.hub-drawing {
    display: block;
}
.hub-drawing path {
    fill: none;
}
.guide {
    stroke: #c8c8c8;
}
.dims {
    font: 10px "DejaVu Sans Mono", monospace;
    text-anchor: middle;
    fill: #000;
    stroke: #fff;
    stroke-width: 5px;
    paint-order: stroke;
}

/* downloads shelf */
.downloads {
    display: flex;
    align-items: center;
    height: 49px;
    padding: 0 13px 0 3px;
    border-top: 1px solid #b3b3b3;
    color: #3c4043;
}
.download {
    display: flex;
    align-items: center;
    gap: 13px;
    flex: 0 1 227px;
    height: 36px;
    padding: 0 17px;
    border-right: 1px solid #ccc;
    font-size: 13px;
}
.download span {
    flex: 1;
    padding-top: 3px;
}
.up {
    width: 10px;
    height: 8px;
}
.show-all {
    width: 106px;
    height: 32px;
    margin-left: auto;
    padding-bottom: 2px;
    border: 1px solid #dadce0;
    border-radius: 4px;
}
.hide {
    margin-left: 13px;
}

/* taskbar */
.taskbar {
    position: relative;
    display: flex;
    align-items: center;
    gap: 2px;
    height: 40px;
    border-top: 1px solid #1f3a56;
    box-shadow: inset 0 1px #8fbfe0;
    background: linear-gradient(90deg, #1b5c8f, #1f6698 3%, #3a96cc 4%, #48a0d6 20%, #3f9dd0 38%, #2b82c6 48%, #287ec6 58%, #2070b4 66%, #1f69b0 72%, #1d60aa 80%, #1a4c85 82%, #20507f 90%, #163c6a);
    color: #fff;
}
.streaks {
    position: absolute;
    inset: 0;
    width: 100%;
    height: 100%;
}
.start, .task, .tray {
    position: relative;
}
.start {
    width: 57px;
}
.start svg {
    display: block;
    width: 38px;
    margin-left: 8px;
}
.task {
    width: 60px;
    height: 39px;
    border: 1px solid #123f63;
    border-radius: 3px;
    background: linear-gradient(135deg, rgba(255, 255, 255, 0.6), rgba(255, 255, 255, 0.1) 60%);
    box-shadow: inset 0 0 0 1px rgba(255, 255, 255, 0.5);
}
.task svg {
    display: block;
    width: 32px;
    height: 32px;
    margin: auto;
}
.task-active {
    background: linear-gradient(135deg, #dfe9f2, #b3cadb);
}
.stack {
    padding-right: 8px;
    box-shadow: inset 0 0 0 1px rgba(255, 255, 255, 0.5), inset -5px 0 rgba(30, 90, 140, 0.4), inset -6px 0 #b5d8ee;
}
.tray {
    display: flex;
    align-items: center;
    gap: 8px;
    height: 100%;
    margin-left: auto;
}
.tray-files {
    width: 16px;
    height: 16px;
    margin-bottom: 8px;
}
.cut {
    margin-bottom: 10px;
}
.chev {
    width: 10px;
    height: 8px;
    align-self: flex-start;
    margin-top: 5px;
}
.lang {
    margin: 0 10px 4px 2px;
}
.tri {
    width: 8px;
    height: 4px;
    margin-right: 2px;
}
.clock {
    display: flex;
    flex-direction: column;
    align-items: center;
    width: 70px;
    line-height: 17px;
}
.peek {
    width: 14px;
    height: 39px;
    border: 1px solid #7590ad;
    background: linear-gradient(135deg, #6d88a5, #1c3e68 60%);
}
```
